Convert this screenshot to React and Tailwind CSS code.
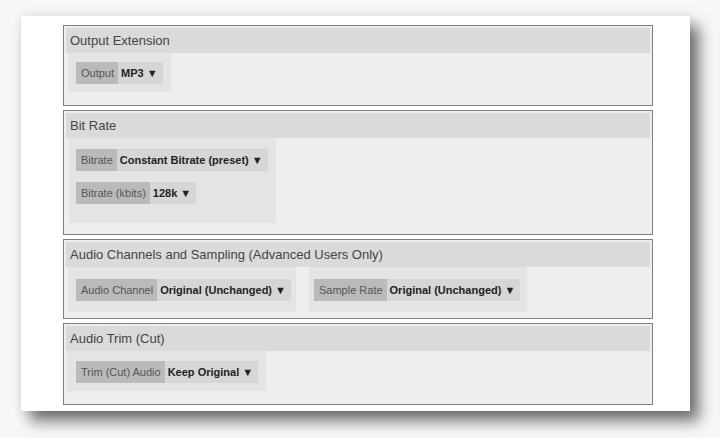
import React from 'react';

const Select = ({ label, value }) => (
  <div className="flex h-[22px] items-stretch text-[11px] leading-[22px]">
    <span className="bg-[#bababa] pl-[5px] pr-[4px] text-[#555]">{label}</span>
    <span className="bg-[#d6d6d6] pl-[3px] pr-[5px] font-bold text-[#222]">
      {value} <span className="text-[11px]">▼</span>
    </span>
  </div>
);

const Panel = ({ title, pb, children }) => (
  <div className={`border border-[#7f7f7f] bg-[#eeeeee] p-[2px] ${pb}`}>
    <div className="flex h-[25px] items-center bg-[#dadada] pl-[4px] text-[13px] text-[#444]">
      {title}
    </div>
    {children}
  </div>
);

export default function App() {
  return (
    <div
      className="h-[438px] w-[720px] overflow-hidden bg-[#f7f7f7] pl-[21px] pt-[16px]"
      style={{ fontFamily: '"Liberation Sans", Arial, sans-serif' }}
    >
      <div className="flex h-[395px] w-[669px] flex-col gap-[4px] bg-white pl-[42px] pr-[37px] pt-[9px] shadow-[9px_10px_14px_rgba(0,0,0,0.55),0_0_10px_rgba(0,0,0,0.08)]">
        <Panel title="Output Extension" pb="pb-[13px]">
          <div className="ml-[2px] w-fit bg-[#e4e4e4] px-2 pb-[8px] pt-[9px]">
            <Select label="Output" value="MP3" />
          </div>
        </Panel>

        <Panel title="Bit Rate" pb="pb-[11px]">
          <div className="ml-[3px] flex w-fit flex-col gap-[11px] bg-[#e4e4e4] pb-[19px] pl-[7px] pr-2 pt-[11px]">
            <div className="w-fit">
              <Select label="Bitrate" value="Constant Bitrate (preset)" />
            </div>
            <div className="w-fit">
              <Select label="Bitrate (kbits)" value="128k" />
            </div>
          </div>
        </Panel>

        <Panel title="Audio Channels and Sampling (Advanced Users Only)" pb="pb-[6px]">
          <div className="ml-[2px] flex gap-[13px]">
            <div className="bg-[#e4e4e4] pb-[11px] pl-2 pr-[5px] pt-[12px]">
              <Select label="Audio Channel" value="Original (Unchanged)" />
            </div>
            <div className="bg-[#e4e4e4] pb-[11px] pl-[5px] pr-[7px] pt-[12px]">
              <Select label="Sample Rate" value="Original (Unchanged)" />
            </div>
          </div>
        </Panel>

        <Panel title="Audio Trim (Cut)" pb="pb-[13px]">
          <div className="ml-[1px] w-fit bg-[#e4e4e4] pb-[8px] pl-[9px] pr-2 pt-[10px]">
            <Select label="Trim (Cut) Audio" value="Keep Original" />
          </div>
        </Panel>
      </div>
    </div>
  );
}
